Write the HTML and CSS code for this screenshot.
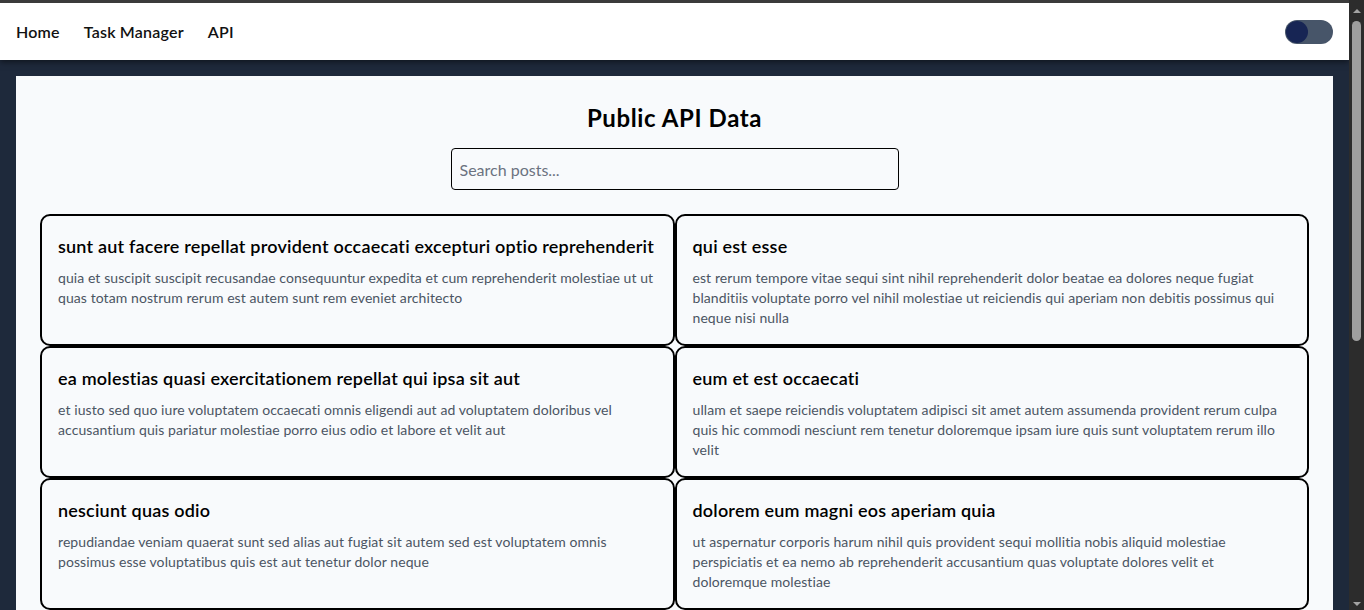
FILE: index.html
```html
<!DOCTYPE html>
<html lang="en">
<head>
<meta charset="utf-8">
<title>Public API Data</title>
<link rel="stylesheet" href="styles.css">
</head>
<body>
<nav class="navbar">
  <div class="nav-links">
    <a class="nav-link" href="#">Home</a>
    <a class="nav-link" href="#">Task Manager</a>
    <a class="nav-link" href="#">API</a>
  </div>
  <button class="toggle" aria-label="Toggle theme"><span class="knob"></span></button>
</nav>
<main class="page">
  <h2 class="title">Public API Data</h2>
  <div class="search-wrap"><input class="search" type="text" placeholder="Search posts..."></div>
  <div class="grid">
    <div class="card"><h3>sunt aut facere repellat provident occaecati excepturi optio reprehenderit</h3><p>quia et suscipit suscipit recusandae consequuntur expedita et cum reprehenderit molestiae ut ut quas totam nostrum rerum est autem sunt rem eveniet architecto</p></div>
    <div class="card"><h3>qui est esse</h3><p>est rerum tempore vitae sequi sint nihil reprehenderit dolor beatae ea dolores neque fugiat blanditiis voluptate porro vel nihil molestiae ut reiciendis qui aperiam non debitis possimus qui neque nisi nulla</p></div>
    <div class="card"><h3>ea molestias quasi exercitationem repellat qui ipsa sit aut</h3><p>et iusto sed quo iure voluptatem occaecati omnis eligendi aut ad voluptatem doloribus vel accusantium quis pariatur molestiae porro eius odio et labore et velit aut</p></div>
    <div class="card"><h3>eum et est occaecati</h3><p>ullam et saepe reiciendis voluptatem adipisci sit amet autem assumenda provident rerum culpa quis hic commodi nesciunt rem tenetur doloremque ipsam iure quis sunt voluptatem rerum illo velit</p></div>
    <div class="card"><h3>nesciunt quas odio</h3><p>repudiandae veniam quaerat sunt sed alias aut fugiat sit autem sed est voluptatem omnis possimus esse voluptatibus quis est aut tenetur dolor neque</p></div>
    <div class="card"><h3>dolorem eum magni eos aperiam quia</h3><p>ut aspernatur corporis harum nihil quis provident sequi mollitia nobis aliquid molestiae perspiciatis et ea nemo ab reprehenderit accusantium quas voluptate dolores velit et<br>doloremque molestiae</p></div>
    <div class="card"><h3>magnam facilis autem</h3><p>dolore placeat quibusdam ea quo vitae magni quis enim qui quis quo nemo aut saepe quidem repellat excepturi ut quia sunt ut sequi eos ea sed quas</p></div>
    <div class="card"><h3>dolorem dolore est ipsam</h3><p>dignissimos aperiam dolorem qui eum facilis quibusdam animi sint suscipit qui sint possimus cum quaerat magni maiores excepturi ipsam ut commodi dolor voluptatum modi aut vitae</p></div>
    <div class="card"><h3>nesciunt iure omnis dolorem tempora et accusantium</h3><p>consectetur animi nesciunt iure dolore enim quia ad veniam autem ut quam aut nobis et est aut quod aut provident voluptas autem voluptas</p></div>
    <div class="card"><h3>optio molestias id quia eum</h3><p>quo et expedita modi cum officia vel magni doloribus qui repudiandae vero nisi sit quos veniam quod sed accusamus veritatis error</p></div>
  </div>
</main>
<div class="scrollbar" aria-hidden="true">
  <span class="arrow-up"></span>
  <span class="thumb"></span>
  <span class="arrow-down"></span>
</div>
</body>
</html>
```
FILE: styles.css
```css
html {
  background: #1e293b;
}
body {
  margin: 0 15px 0 0;
  border-top: 3px solid #3b3b3b;
  background: #1e293b;
  font-family: "Lato", "Open Sans", sans-serif;
  color: #000;
  padding-bottom: 16px;
}
.navbar {
  background: #fff;
  height: 57px;
  display: flex;
  align-items: center;
  justify-content: space-between;
  padding: 0 16px;
  box-shadow: 0 2px 6px rgba(0, 0, 0, 0.5);
  position: relative;
}
.nav-links {
  display: flex;
  gap: 24px;
}
.nav-link {
  color: #111;
  text-decoration: none;
  font-size: 16px;
  font-weight: 600;
  letter-spacing: 0.2px;
}
.toggle {
  width: 48px;
  height: 24px;
  border: none;
  border-radius: 12px;
  background: #475569;
  padding: 1px;
  display: flex;
  align-items: center;
  cursor: pointer;
}
.knob {
  width: 22px;
  height: 22px;
  border-radius: 50%;
  background: #172554;
}
.page {
  margin: 16px 16px 0;
  background: #f8fafc;
  padding: 24px;
}
.title {
  margin: 0;
  text-align: center;
  font-size: 24px;
  line-height: 36px;
  font-weight: 700;
  letter-spacing: 0.6px;
  color: #000;
}
.search-wrap {
  display: flex;
  justify-content: center;
  margin-top: 12px;
  margin-bottom: 24px;
}
.search {
  width: 448px;
  height: 42px;
  box-sizing: border-box;
  border: 1px solid #000;
  border-radius: 4px;
  padding: 8px;
  font-size: 16px;
  font-family: inherit;
  background: #f8fafc;
  color: #111;
}
.search::placeholder {
  color: #6b7280;
}
.grid {
  display: grid;
  grid-template-columns: 1fr 1fr;
}
.card {
  border: 2px solid #000;
  border-radius: 10px;
  padding: 16px;
  background: #f8fafc;
}
.card h3 {
  margin: 0 0 8px;
  font-size: 18px;
  line-height: 28px;
  font-weight: 600;
  letter-spacing: 0.2px;
  color: #000;
}
.card p {
  margin: 0;
  font-size: 14px;
  line-height: 20px;
  letter-spacing: 0.08px;
  color: #4b5563;
}
.scrollbar {
  position: fixed;
  top: 0;
  right: 0;
  bottom: 0;
  width: 15px;
  background: #2c2c2c;
}
.arrow-up,
.arrow-down {
  position: absolute;
  left: 4px;
  width: 0;
  height: 0;
  border-left: 4px solid transparent;
  border-right: 4px solid transparent;
}
.arrow-up {
  top: 9px;
  border-bottom: 4px solid #a3a3a3;
}
.arrow-down {
  bottom: 4px;
  border-top: 4px solid #a3a3a3;
}
.thumb {
  position: absolute;
  top: 21px;
  left: 3px;
  width: 9px;
  height: 320px;
  border-radius: 5px;
  background: #9f9f9f;
}
```
